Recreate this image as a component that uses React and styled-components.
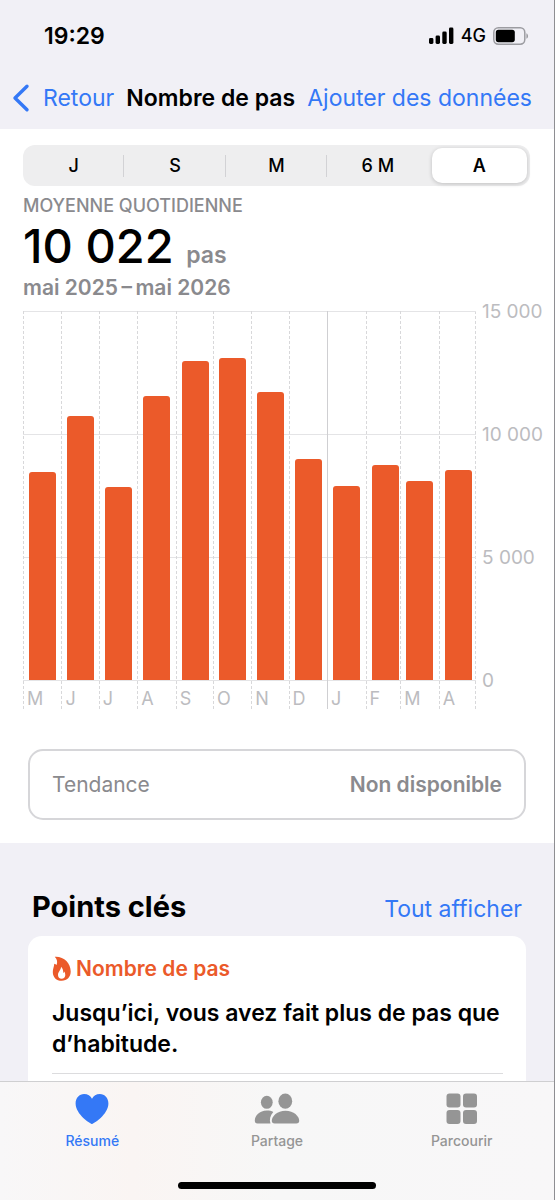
import React from 'react';
import styled, { createGlobalStyle } from 'styled-components';

const ranges = ['J', 'S', 'M', '6 M', 'A'];

const months = [
  { label: 'M', name: 'mai', days: 31, steps: 8455 },
  { label: 'J', name: 'juin', days: 30, steps: 10740 },
  { label: 'J', name: 'juillet', days: 31, steps: 7850 },
  { label: 'A', name: 'août', days: 31, steps: 11545 },
  { label: 'S', name: 'septembre', days: 30, steps: 12970 },
  { label: 'O', name: 'octobre', days: 31, steps: 13110 },
  { label: 'N', name: 'novembre', days: 30, steps: 11707 },
  { label: 'D', name: 'décembre', days: 31, steps: 8984 },
  { label: 'J', name: 'janvier', days: 31, steps: 7886, newYear: true },
  { label: 'F', name: 'février', days: 28, steps: 8730 },
  { label: 'M', name: 'mars', days: 31, steps: 8100 },
  { label: 'A', name: 'avril', days: 30, steps: 8540 },
];

const maxSteps = 15000;

const App = () => {
  const [range, setRange] = React.useState('A');

  return (
    <Screen>
      <GlobalStyle />
      <Header>
        <StatusBar>
          <Clock>19:29</Clock>
          <StatusIcons>
            <SignalIcon />
            <Network>4G</Network>
            <BatteryIcon />
          </StatusIcons>
        </StatusBar>
        <NavBar>
          <BackButton type="button">
            <ChevronIcon />
            Retour
          </BackButton>
          <Title>Nombre de pas</Title>
          <NavButton type="button">Ajouter des données</NavButton>
        </NavBar>
      </Header>

      <ChartSection>
        <Segments>
          {ranges.map((item) => (
            <Segment
              key={item}
              type="button"
              $active={item === range}
              aria-pressed={item === range}
              onClick={() => setRange(item)}
            >
              {item}
            </Segment>
          ))}
        </Segments>

        <Caption>MOYENNE QUOTIDIENNE</Caption>
        <Total>
          10 022 <Unit>pas</Unit>
        </Total>
        <Period>mai 2025{'\u2009'}–{'\u2009'}mai 2026</Period>

        <Chart>
          <Plot>
            {months.map((month) => (
              <Month key={month.name} $days={month.days} $solid={month.newYear}>
                <BarArea>
                  <Bar style={{ height: `${(month.steps / maxSteps) * 100}%` }} />
                </BarArea>
                <MonthLabel>{month.label}</MonthLabel>
              </Month>
            ))}
          </Plot>
          <Axis>
            <span>15 000</span>
            <span>10 000</span>
            <span>5 000</span>
            <span>0</span>
          </Axis>
        </Chart>

        <Trend>
          <span>Tendance</span>
          <strong>Non disponible</strong>
        </Trend>
      </ChartSection>

      <Highlights>
        <HighlightsHead>
          <h2>Points clés</h2>
          <ShowAll href="#points">Tout afficher</ShowAll>
        </HighlightsHead>
        <Card>
          <CardTitle>
            <FlameIcon />
            Nombre de pas
          </CardTitle>
          <CardText>Jusqu’ici, vous avez fait plus de pas que d’habitude.</CardText>
        </Card>
      </Highlights>

      <BottomBar>
        <Tabs>
          <Tab href="#resume" $active>
            <HeartIcon />
            Résumé
          </Tab>
          <Tab href="#partage">
            <PeopleIcon />
            Partage
          </Tab>
          <Tab href="#parcourir">
            <GridIcon />
            Parcourir
          </Tab>
        </Tabs>
        <HomeIndicator />
      </BottomBar>
    </Screen>
  );
};

export default App;

const SignalIcon = () => (
  <svg width="25" height="18" viewBox="0 0 25 18" aria-hidden="true">
    <rect x="0" y="11" width="4.4" height="6" rx="1.4" />
    <rect x="6.6" y="8.5" width="4.4" height="8.500" rx="1.4" />
    <rect x="13.3" y="4.5" width="4.4" height="12.500" rx="1.4" />
    <rect x="20" y="0.5" width="4.4" height="16.500" rx="1.4" />
  </svg>
);

const BatteryIcon = () => (
  <svg width="36" height="18" viewBox="0 0 36 18" aria-hidden="true">
    <rect x="0.8" y="0.8" width="31" height="16.4" rx="4.6" fill="none" stroke="#9c9ca1" strokeWidth="1.5" />
    <rect x="2.8" y="2.8" width="19" height="12.4" rx="2.6" />
    <path d="M33.4 6.2c2.2 1 2.2 4.6 0 5.6z" fill="#9c9ca1" />
  </svg>
);

const ChevronIcon = () => (
  <svg width="18" height="30" viewBox="0 0 18 30" aria-hidden="true">
    <path d="M15 3.200 3 15l12 11.800" fill="none" stroke="currentColor" strokeWidth="3.4" strokeLinecap="round" strokeLinejoin="round" />
  </svg>
);

const FlameIcon = () => (
  <svg width="19" height="26" viewBox="0 0 19 26" aria-hidden="true">
    <path
      fill="currentColor"
      fillRule="evenodd"
      d="M2.800.8C11.800.2 18.700 6.800 18.700 15.500c0 5.400-3.600 9.300-9 9.300C4.300 24.800.8 21.300.8 16c0-3 1.200-5 1.500-8.300 1 .1 1.700.6 2.300 1.400C5.600 6.200 5.300 3.200 2.800.8zM9 10.800c.3 2.700-3 5-3 8.200 0 2.300 1.400 3.800 3.600 3.800s3.700-1.500 3.700-3.800c0-1.300-.4-2.400-1.100-3.400-.1.700-.4 1.200-.9 1.500.1-2.500-.6-4.800-2.300-6.300z"
    />
  </svg>
);

const HeartIcon = () => (
  <svg width="34" height="32" viewBox="0 0 34 32" aria-hidden="true">
    <path fill="currentColor" d="M17 31C15.800 31 .6 21.500.6 10.500.6 4.900 4.300 1 9.100 1 12.800 1 15.500 3 17 5.800 18.500 3 21.200 1 24.900 1c4.800 0 8.500 3.900 8.500 9.500C33.400 21.500 18.200 31 17 31z" />
  </svg>
);

const PeopleIcon = () => (
  <svg width="46" height="32" viewBox="0 0 46 32" aria-hidden="true">
    <g fill="currentColor">
      <ellipse cx="12.800" cy="9.300" rx="5.900" ry="6.500" />
      <path d="M19.300 18.900C17.500 18 15.400 17.500 12.800 17.500 5.500 17.500.8 23 .8 27.300c0 2.200.8 3.200 2.700 3.200h13c-1.400-3.800-.4-8 2.800-11.600z" />
      <ellipse cx="31.300" cy="8.200" rx="6.900" ry="7.600" />
      <path d="M20.700 30.500c-2 0-2.900-1-2.900-2.700 0-4.600 5.300-10.100 13.700-10.100s13.700 5.500 13.700 10.100c0 1.700-.9 2.700-2.900 2.700z" />
    </g>
  </svg>
);

const GridIcon = () => (
  <svg width="32" height="32" viewBox="0 0 32 32" aria-hidden="true">
    <g fill="currentColor">
      <rect x="0.500" y="0.500" width="14" height="14" rx="3" />
      <rect x="17" y="0.500" width="14" height="14" rx="3" />
      <rect x="0.500" y="17" width="14" height="14" rx="3" />
      <rect x="17" y="17" width="14" height="14" rx="3" />
    </g>
  </svg>
);

const GlobalStyle = createGlobalStyle`
*{
  box-sizing: border-box;
}
body{
  margin: 0;
  font-family: Inter, "Liberation Sans", sans-serif;
  color: #000;
  background: #f1f0f6;
}
button{
  border: 0;
  padding: 0;
  background: none;
  color: inherit;
  font: inherit;
  cursor: pointer;
}
a{
  text-decoration: none;
}
h1, h2, p{
  margin: 0;
}
svg{
  display: block;
  flex: none;
}
`;

const Screen = styled.div`
height: 100vh;
display: flex;
flex-direction: column;
overflow: hidden;
border-right: 1px solid #8e8e92;
background: #f1f0f6;
`;

const Header = styled.header`
flex: none;
`;

const StatusBar = styled.div`
height: 71px;
display: flex;
justify-content: space-between;
align-items: center;
padding: 0 25px 0 44px;
`;

const Clock = styled.div`
font-size: 23px;
font-weight: 600;
`;

const StatusIcons = styled.div`
display: flex;
align-items: center;
gap: 7px;
`;

const Network = styled.span`
font-size: 18px;
font-weight: 500;
`;

const NavBar = styled.nav`
height: 58px;
display: flex;
justify-content: space-between;
align-items: center;
padding: 0 22px 4px 12px;
font-size: 23px;
`;

const NavButton = styled.button`
color: #3478f6;
white-space: nowrap;
`;

const BackButton = styled(NavButton)`
display: flex;
align-items: center;
gap: 13px;
`;

const Title = styled.h1`
font-size: 23px;
font-weight: 600;
white-space: nowrap;
`;

const ChartSection = styled.main`
flex: none;
padding: 16px 10px 23px 23px;
background: #fff;
`;

const Segments = styled.div`
height: 41px;
display: grid;
grid-template-columns: repeat(5, 1fr);
margin-right: 14px;
border-radius: 12px;
background: #eeeeef;
`;

const Segment = styled.button`
margin: ${({ $active }) => ($active ? '3px' : '0')};
border-radius: 10px;
font-size: 18px;
font-weight: ${({ $active }) => ($active ? 600 : 500)};
background: ${({ $active }) => ($active ? '#fff' : 'none')};
box-shadow: ${({ $active }) => ($active ? '0 1px 4px rgba(0, 0, 0, 0.2)' : 'none')};

&[aria-pressed='false']:not(:nth-last-child(-n + 2)){
  border-radius: 0;
  background: linear-gradient(#d2d2d5, #d2d2d5) right center / 1px 22px no-repeat;
}
`;

const Caption = styled.p`
margin-top: 8px;
font-size: 18px;
line-height: 24px;
font-weight: 500;
color: #8a8a8e;
`;

const Total = styled.p`
font-size: 47px;
line-height: 56px;
font-weight: 500;
`;

const Unit = styled.span`
font-size: 23px;
line-height: 24px;
font-weight: 600;
color: #8a8a8e;
`;

const Period = styled.p`
font-size: 21px;
line-height: 28px;
font-weight: 600;
color: #8a8a8e;
`;

const Chart = styled.div`
display: flex;
margin-top: 9px;
`;

const Plot = styled.div`
flex: 1;
display: flex;
background:
  linear-gradient(#e4e4e6, #e4e4e6) 0 0 / 100% 1px no-repeat,
  linear-gradient(#e4e4e6, #e4e4e6) 0 123px / 100% 1px no-repeat,
  linear-gradient(#e4e4e6, #e4e4e6) 0 246px / 100% 1px no-repeat,
  linear-gradient(#e4e4e6, #e4e4e6) 0 369px / 100% 1px no-repeat,
  repeating-linear-gradient(#d8d8da 0 3px, transparent 3px 5px) right / 1px 100% no-repeat;
`;

const Month = styled.div`
flex: ${({ $days }) => $days} 0 0;
background: ${({ $solid }) =>
  $solid ? 'linear-gradient(#cfcfd2, #cfcfd2)' : 'repeating-linear-gradient(#d8d8da 0 3px, transparent 3px 5px)'}
  left / 1px 100% no-repeat;
`;

const BarArea = styled.div`
height: 369px;
display: flex;
align-items: flex-end;
padding-left: 6px;
`;

const Bar = styled.div`
flex: 1;
max-width: 27px;
border-radius: 3px 3px 0 0;
background: #eb5a2a;
`;

const MonthLabel = styled.div`
height: 29px;
padding: 5px 0 0 4px;
font-size: 18px;
line-height: 28px;
color: #bcbcc0;
`;

const Axis = styled.div`
width: 68px;
height: 393px;
display: flex;
flex-direction: column;
justify-content: space-between;
margin-top: -11px;
padding-left: 6px;
font-size: 19px;
line-height: 24px;
color: #bcbcc0;
white-space: nowrap;
`;

const Trend = styled.div`
height: 71px;
display: flex;
justify-content: space-between;
align-items: center;
margin: 40px 18px 0 5px;
padding: 0 22px;
border: 2px solid #d6d6d9;
border-radius: 15px;
font-size: 21px;
color: #8a8a8e;

strong{
  font-weight: 600;
}
`;

const Highlights = styled.section`
flex: 1;
min-height: 0;
padding: 44px 28px 0;
`;

const HighlightsHead = styled.div`
display: flex;
justify-content: space-between;
align-items: baseline;
padding: 0 4px;

h2{
  font-size: 29px;
  line-height: 40px;
  font-weight: 700;
}
`;

const ShowAll = styled.a`
font-size: 23px;
color: #3478f6;
`;

const Card = styled.article`
height: 200px;
margin-top: 9px;
padding: 20px 23px 0 24px;
border-radius: 14px;
background: #fff;
`;

const CardTitle = styled.div`
display: flex;
align-items: center;
gap: 5px;
font-size: 21px;
line-height: 26px;
font-weight: 600;
color: #eb5a2a;
`;

const CardText = styled.p`
margin-top: 16px;
padding-bottom: 13px;
border-bottom: 1px solid #dcdcde;
font-size: 23px;
line-height: 31px;
font-weight: 600;
`;

const BottomBar = styled.footer`
position: relative;
flex: none;
height: 119px;
border-top: 1px solid #cfcfd1;
background: linear-gradient(90deg, #f8f7f8, #faf5f3 24%, #f7f7f7 50%, #f8f7f8);
`;

const Tabs = styled.nav`
display: flex;
padding-top: 11px;
`;

const Tab = styled.a`
flex: 1;
display: flex;
flex-direction: column;
align-items: center;
gap: 6px;
font-size: 14px;
line-height: 20px;
font-weight: 500;
color: ${({ $active }) => ($active ? '#3478f6' : '#959595')};
`;

const HomeIndicator = styled.div`
width: 198px;
height: 7px;
margin: 31px auto 0;
border-radius: 4px;
background: #000;
`;
